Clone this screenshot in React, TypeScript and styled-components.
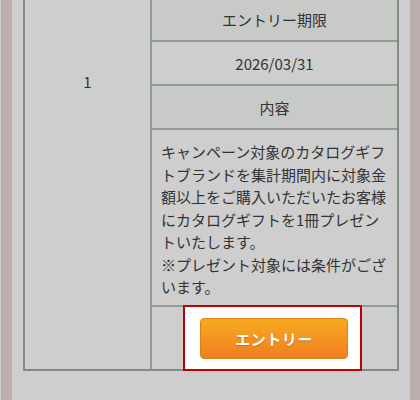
import React from "react";
import styled, { createGlobalStyle } from "styled-components";

const Global = createGlobalStyle`
  html, body { margin: 0; padding: 0; }
  body {
    background: #cecece;
    font-family: "Noto Sans CJK JP", "Noto Sans", sans-serif;
    color: #333;
  }
`;

const Page = styled.div`
  width: 420px;
  height: 400px;
  overflow: hidden;
  display: flex;
  align-items: flex-start;
  background: #cecece;
`;

const Strip = styled.div<{ $side: "left" | "right" }>`
  flex: none;
  width: ${(p) => (p.$side === "left" ? 11 : 10)}px;
  height: 400px;
  margin-left: ${(p) => (p.$side === "left" ? 1 : 11)}px;
  background: #bdaeae;
`;

const Table = styled.div`
  flex: none;
  width: 372px;
  margin-left: 11px;
  margin-top: -4px;
  border: 2px solid #7f8e7f;
  display: grid;
  grid-template-columns: 127px 1fr;
`;

const NumCell = styled.div`
  border-right: 2px solid #909d90;
  display: flex;
  justify-content: center;
  align-items: flex-start;
  padding-top: 73px;
  font-size: 15px;
  line-height: 22.5px;
`;

const Column = styled.div`
  display: flex;
  flex-direction: column;
`;

const Cell = styled.div<{ $head?: boolean }>`
  height: 42px;
  border-bottom: 2px solid #909d90;
  background: ${(p) => (p.$head ? "#c8cac8" : "#cecece")};
  display: flex;
  align-items: center;
  justify-content: center;
  font-size: 15px;
`;

const TextCell = styled.div`
  border-bottom: 2px solid #909d90;
  padding: 11px 6px 7px 9px;
  height: 175px;
  box-sizing: border-box;
  font-size: 15px;
  line-height: 22.5px;
  height: 177px;
`;

const ActionCell = styled.div`
  height: 62px;
  display: flex;
  justify-content: center;
  align-items: stretch;
  padding-right: 4px;
`;

const Highlight = styled.div`
  position: relative;
  z-index: 1;
  box-sizing: border-box;
  width: 179px;
  margin: -2px 0 -2px;
  background: #ffffff;
  border: 2px solid #c00000;
  display: flex;
  align-items: center;
  justify-content: center;
  padding: 1px 0 0 3px;
`;

const EntryButton = styled.button`
  width: 148px;
  height: 41px;
  border: 1px solid #d9821b;
  border-radius: 4px;
  background: linear-gradient(#f8aa20, #f07e22);
  color: #fff;
  font-family: "Noto Sans CJK JP", "Noto Sans", sans-serif;
  font-weight: bold;
  font-size: 15px;
  letter-spacing: 0.5px;
  text-shadow: 0 1px 1px rgba(160, 70, 0, 0.45);
  cursor: pointer;
  padding: 0;
`;

export default function App() {
  return (
    <>
      <Global />
      <Page>
        <Strip $side="left" />
        <Table>
          <NumCell>1</NumCell>
          <Column>
            <Cell $head>エントリー期限</Cell>
            <Cell>2026/03/31</Cell>
            <Cell $head>内容</Cell>
            <TextCell>
              キャンペーン対象のカタログギフトブランドを集計期間内に対象金額以上をご購入いただいたお客様にカタログギフトを1冊プレゼントいたします。
              <br />
              ※プレゼント対象には条件がございます。
            </TextCell>
            <ActionCell>
              <Highlight>
                <EntryButton type="button">エントリー</EntryButton>
              </Highlight>
            </ActionCell>
          </Column>
        </Table>
        <Strip $side="right" />
      </Page>
    </>
  );
}
